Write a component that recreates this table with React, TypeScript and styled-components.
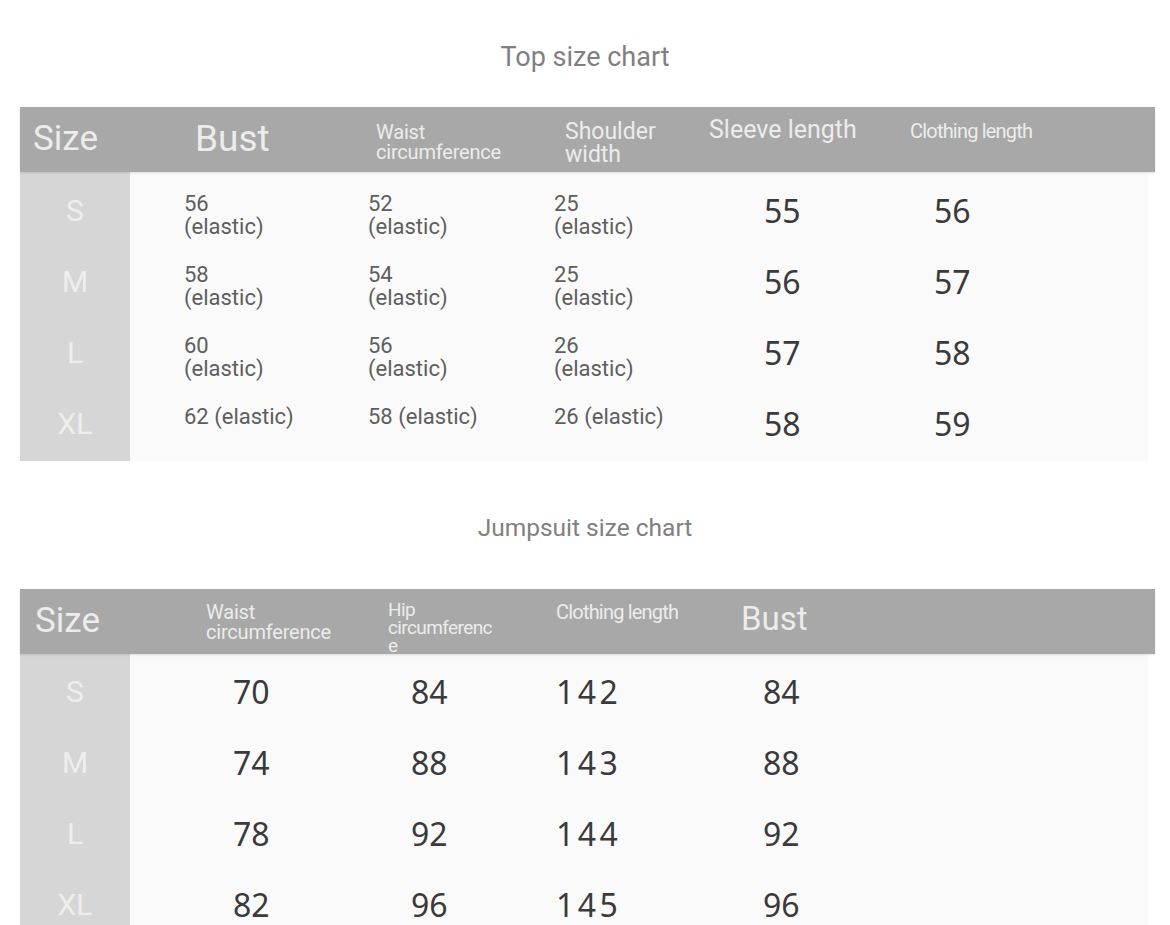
import React from "react";
import styled, { createGlobalStyle } from "styled-components";

const Global = createGlobalStyle`
  html, body { margin: 0; padding: 0; overflow: hidden; background: #ffffff; }
  body { font-family: Roboto, "Liberation Sans", Arial, sans-serif; }
`;

const Page = styled.div`
  width: 1170px;
  height: 925px;
  overflow: hidden;
  display: flex;
  flex-direction: column;
  background: #ffffff;
`;

const Title = styled.div<{ $top: number; $bottom: number; $size: number }>`
  text-align: center;
  font-size: ${(p) => p.$size}px;
  color: #808080;
  line-height: 30px;
  height: 30px;
  margin-top: ${(p) => p.$top}px;
  margin-bottom: ${(p) => p.$bottom}px;
`;

const Table = styled.div`
  margin: 0 15px 0 20px;
  display: flex;
  flex-direction: column;
`;

const HeaderRow = styled.div<{ $cols: string }>`
  display: grid;
  grid-template-columns: ${(p) => p.$cols};
  height: 65px;
  background: #a8a8a8;
  box-shadow: 0 1px 2px rgba(0, 0, 0, 0.12);
  position: relative;
  z-index: 2;
`;

const HeadCell = styled.div<{ $pad: number; $size: number; $top?: number; $ls?: number; $lh?: number }>`
  padding-left: ${(p) => p.$pad}px;
  padding-top: ${(p) => p.$top ?? 0}px;
  display: flex;
  align-items: ${(p) => (p.$top !== undefined ? "flex-start" : "center")};
  font-size: ${(p) => p.$size}px;
  line-height: ${(p) => p.$lh ?? 1.05};
  letter-spacing: ${(p) => p.$ls ?? 0}px;
  color: #ececec;
  white-space: pre-line;
  min-height: 0;
`;

const Body = styled.div<{ $cols: string; $padTop: number }>`
  display: grid;
  grid-template-columns: ${(p) => p.$cols};
  grid-auto-rows: 71px;
  padding-top: ${(p) => p.$padTop}px;
  padding-bottom: 2px;
  margin-right: 7px;
  background: #fafafa;
`;

const SizeStrip = styled.div<{ $pt: number }>`
  grid-column: 1;
  grid-row: 1 / span 4;
  margin-top: -${(p) => p.$pt}px;
  margin-bottom: -2px;
  background: #d6d6d6;
`;

const SizeCell = styled.div<{ $row: number }>`
  grid-column: 1;
  grid-row: ${(p) => p.$row};
  display: flex;
  align-items: center;
  justify-content: center;
  font-size: 30px;
  color: #eeeeee;
  z-index: 1;
`;

const SmallCell = styled.div<{ $pad: number; $col: number; $row: number }>`
  grid-column: ${(p) => p.$col};
  grid-row: ${(p) => p.$row};
  padding-left: ${(p) => p.$pad}px;
  padding-top: 17px;
  font-size: 22px;
  line-height: 23px;
  color: #5e5e5e;
  white-space: pre-line;
`;

const BigCell = styled.div<{ $pad: number; $col: number; $row: number; $ls?: number }>`
  grid-column: ${(p) => p.$col};
  grid-row: ${(p) => p.$row};
  padding-left: ${(p) => p.$pad}px;
  display: flex;
  align-items: center;
  font-family: "Noto Sans", "DejaVu Sans", sans-serif;
  font-size: 32px;
  letter-spacing: ${(p) => p.$ls ?? 0}px;
  color: #3a3a3a;
`;

const sizes = ["S", "M", "L", "XL"];

type Head = { t: string; pad: number; size: number; top?: number; ls?: number; lh?: number };

const topCols = "110px 230px 186px 154px 180px 1fr";
const topHead: Head[] = [
  { t: "Size", pad: 13, size: 35 },
  { t: "Bust", pad: 65, size: 37 },
  { t: "Waist\ncircumference", pad: 16, size: 20, ls: -0.2, lh: 1.0, top: 15 },
  { t: "Shoulder\nwidth", pad: 19, size: 23, lh: 0.98, top: 14 },
  { t: "Sleeve length", pad: 9, size: 25, top: 10 },
  { t: "Clothing length", pad: 30, size: 20, ls: -0.8, top: 14 },
];
const topRows = [
  ["56\n(elastic)", "52\n(elastic)", "25\n(elastic)", "55", "56"],
  ["58\n(elastic)", "54\n(elastic)", "25\n(elastic)", "56", "57"],
  ["60\n(elastic)", "56\n(elastic)", "26\n(elastic)", "57", "58"],
  ["62 (elastic)", "58 (elastic)", "26 (elastic)", "58", "59"],
];

const jumpCols = "110px 240px 176px 174px 1fr";
const jumpHead: Head[] = [
  { t: "Size", pad: 15, size: 35 },
  { t: "Waist\ncircumference", pad: 76, size: 20, ls: -0.2, lh: 1.0, top: 13 },
  { t: "Hip\ncircumferenc\ne", pad: 18, size: 19, ls: -0.6, lh: 0.95, top: 12 },
  { t: "Clothing length", pad: 10, size: 20, ls: -0.8, top: 13 },
  { t: "Bust", pad: 21, size: 33, top: 13 },
];
const jumpRows = [
  ["70", "84", "142", "84"],
  ["74", "88", "143", "88"],
  ["78", "92", "144", "92"],
  ["82", "96", "145", "96"],
];

function HeaderCells({ heads }: { heads: Head[] }) {
  return (
    <>
      {heads.map((h) => (
        <HeadCell key={h.t} $pad={h.pad} $size={h.size} $top={h.top} $ls={h.ls} $lh={h.lh}>
          {h.t}
        </HeadCell>
      ))}
    </>
  );
}

export default function App() {
  const topSmallPads = [54, 8, 8];
  const topBigPads = [64, 54];
  const jumpPads = [103, 41, 10, 43];
  return (
    <Page>
      <Global />
      <Title $top={42} $bottom={35} $size={27}>Top size chart</Title>
      <Table>
        <HeaderRow $cols={topCols}>
          <HeaderCells heads={topHead} />
        </HeaderRow>
        <Body $cols={topCols} $padTop={3}>
          <SizeStrip $pt={3} />
          {sizes.map((s, i) => (
            <SizeCell key={s} $row={i + 1}>{s}</SizeCell>
          ))}
          {topRows.map((r, i) => (
            <React.Fragment key={i}>
              {r.slice(0, 3).map((v, j) => (
                <SmallCell key={j} $col={j + 2} $row={i + 1} $pad={topSmallPads[j]}>
                  {v}
                </SmallCell>
              ))}
              {r.slice(3).map((v, j) => (
                <BigCell key={j} $col={j + 5} $row={i + 1} $pad={topBigPads[j]}>
                  {v}
                </BigCell>
              ))}
            </React.Fragment>
          ))}
        </Body>
      </Table>
      <Title $top={52} $bottom={46} $size={24.5}>Jumpsuit size chart</Title>
      <Table>
        <HeaderRow $cols={jumpCols}>
          <HeaderCells heads={jumpHead} />
        </HeaderRow>
        <Body $cols={jumpCols} $padTop={2}>
          <SizeStrip $pt={2} />
          {sizes.map((s, i) => (
            <SizeCell key={s} $row={i + 1}>{s}</SizeCell>
          ))}
          {jumpRows.map((r, i) => (
            <React.Fragment key={i}>
              {r.map((v, j) => (
                <BigCell key={j} $col={j + 2} $row={i + 1} $pad={jumpPads[j]} $ls={j === 2 ? 3.5 : 0}>
                  {v}
                </BigCell>
              ))}
            </React.Fragment>
          ))}
        </Body>
      </Table>
    </Page>
  );
}
